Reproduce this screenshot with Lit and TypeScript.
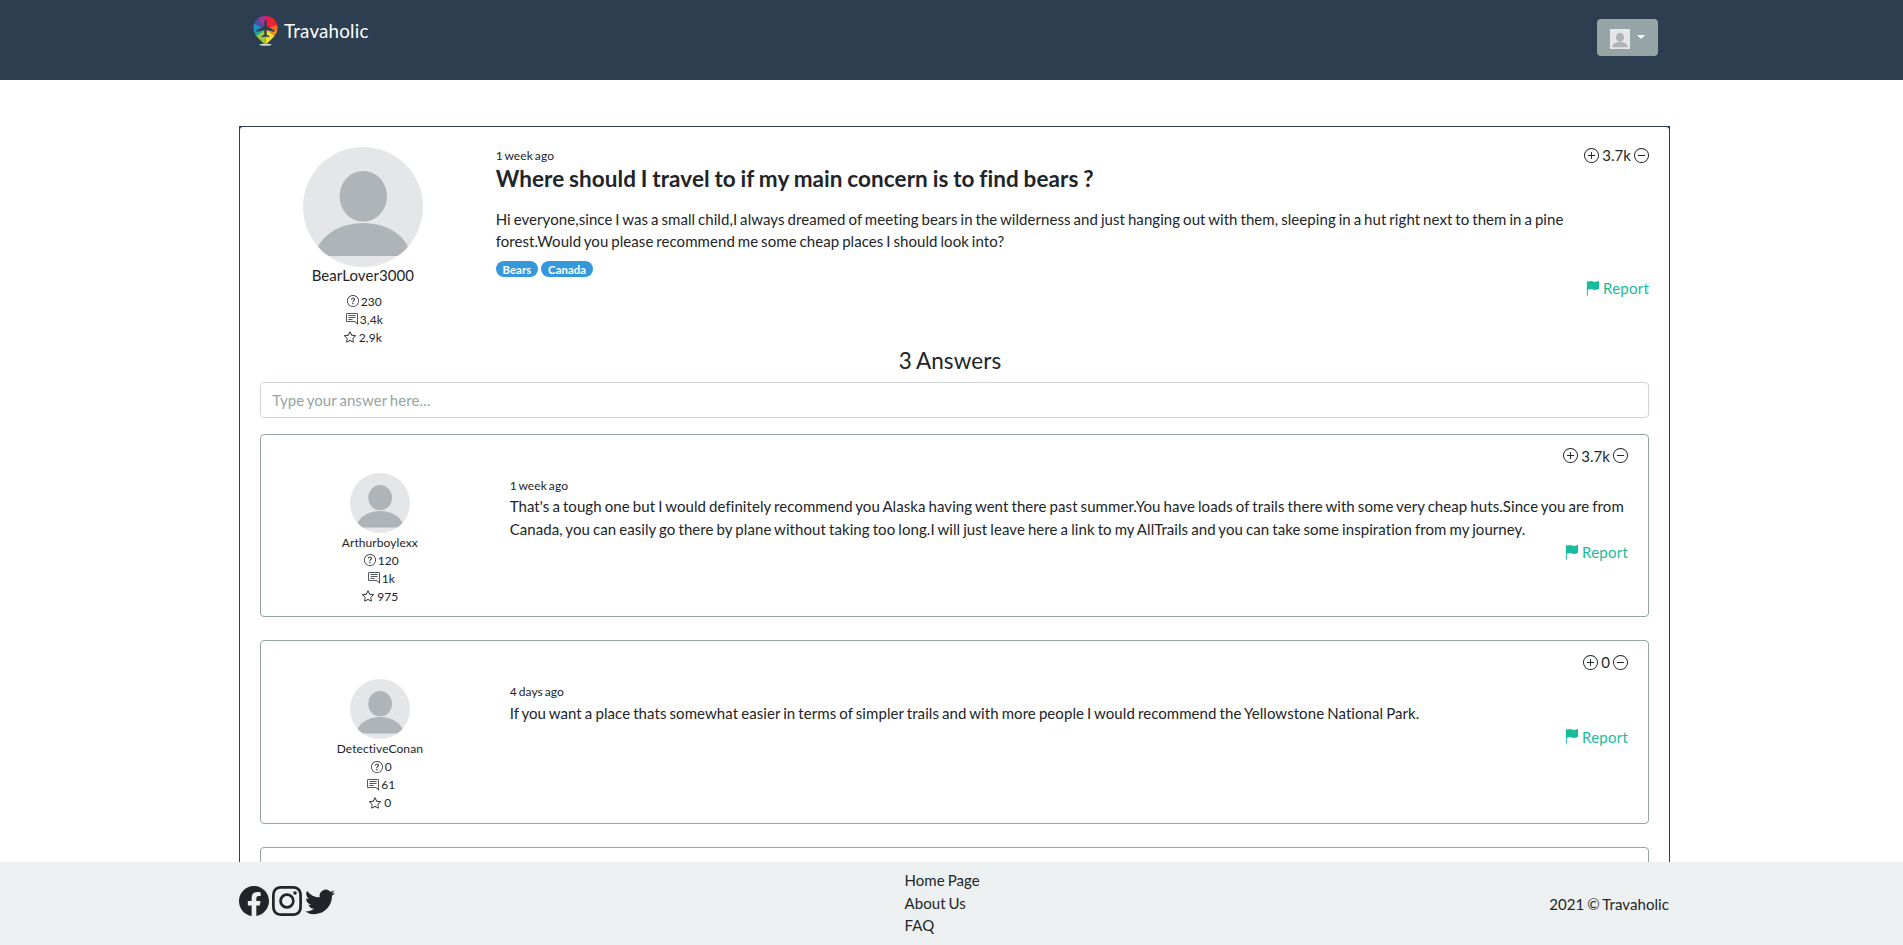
import { LitElement, html, css, svg } from "lit";
import { customElement, property } from "lit/decorators.js";

const paths: Record<string, unknown> = {
  plus: svg`<path d="M8 15A7 7 0 1 1 8 1a7 7 0 0 1 0 14zm0 1A8 8 0 1 0 8 0a8 8 0 0 0 0 16z"/><path d="M8 4a.5.5 0 0 1 .5.5v3h3a.5.5 0 0 1 0 1h-3v3a.5.5 0 0 1-1 0v-3h-3a.5.5 0 0 1 0-1h3v-3A.5.5 0 0 1 8 4z"/>`,
  minus: svg`<path d="M8 15A7 7 0 1 1 8 1a7 7 0 0 1 0 14zm0 1A8 8 0 1 0 8 0a8 8 0 0 0 0 16z"/><path d="M4 8a.5.5 0 0 1 .5-.5h7a.5.5 0 0 1 0 1h-7A.5.5 0 0 1 4 8z"/>`,
  question: svg`<path d="M8 15A7 7 0 1 1 8 1a7 7 0 0 1 0 14zm0 1A8 8 0 1 0 8 0a8 8 0 0 0 0 16z"/><path d="M5.255 5.786a.237.237 0 0 0 .241.247h.825c.138 0 .248-.113.266-.25.09-.656.54-1.134 1.342-1.134.686 0 1.314.343 1.314 1.168 0 .635-.374.927-.965 1.371-.673.489-1.206 1.06-1.168 1.987l.003.217a.25.25 0 0 0 .25.246h.811a.25.25 0 0 0 .25-.25v-.105c0-.718.273-.927 1.01-1.486.609-.463 1.244-.977 1.244-2.056 0-1.511-1.276-2.241-2.673-2.241-1.267 0-2.655.59-2.75 2.286zm1.557 5.763c0 .533.425.927 1.01.927.609 0 1.028-.394 1.028-.927 0-.552-.42-.94-1.029-.94-.584 0-1.009.388-1.009.94z"/>`,
  chat: svg`<path d="M2 1a1 1 0 0 0-1 1v8a1 1 0 0 0 1 1h9.586a2 2 0 0 1 1.414.586l2 2V2a1 1 0 0 0-1-1H2zm12-1a2 2 0 0 1 2 2v12.793a.5.5 0 0 1-.854.353l-2.853-2.853a1 1 0 0 0-.707-.293H2a2 2 0 0 1-2-2V2a2 2 0 0 1 2-2h12z"/><path d="M3 3.5a.5.5 0 0 1 .5-.5h9a.5.5 0 0 1 0 1h-9a.5.5 0 0 1-.5-.5zM3 6a.5.5 0 0 1 .5-.5h9a.5.5 0 0 1 0 1h-9A.5.5 0 0 1 3 6zm0 2.5a.5.5 0 0 1 .5-.5h5a.5.5 0 0 1 0 1h-5a.5.5 0 0 1-.5-.5z"/>`,
  star: svg`<path d="M2.866 14.85c-.078.444.36.791.746.593l4.39-2.256 4.389 2.256c.386.198.824-.149.746-.592l-.83-4.73 3.522-3.356c.33-.314.16-.888-.282-.95l-4.898-.696L8.465.792a.513.513 0 0 0-.927 0L5.354 5.12l-4.898.696c-.441.062-.612.636-.283.95l3.523 3.356-.83 4.73zm4.905-2.767-3.686 1.894.694-3.957a.565.565 0 0 0-.163-.505L1.71 6.745l4.052-.576a.525.525 0 0 0 .393-.288L8 2.223l1.847 3.658a.525.525 0 0 0 .393.288l4.052.575-2.906 2.77a.565.565 0 0 0-.163.506l.694 3.957-3.686-1.894a.503.503 0 0 0-.461 0z"/>`,
  flag: svg`<path d="M14.778.085A.5.5 0 0 1 15 .5V8a.5.5 0 0 1-.314.464l-.003.001-.006.003-.023.009a12.435 12.435 0 0 1-.397.15c-.264.095-.631.223-1.047.35-.816.252-1.879.523-2.71.523-.847 0-1.548-.28-2.158-.525l-.028-.01C7.68 8.71 7.14 8.5 6.5 8.5c-.7 0-1.638.23-2.437.477A19.626 19.626 0 0 0 3 9.342V15.5a.5.5 0 0 1-1 0V.5a.5.5 0 0 1 1 0v.282c.226-.079.496-.17.79-.26C4.606.272 5.67 0 6.5 0c.84 0 1.524.277 2.121.519l.043.018C9.286.788 9.828 1 10.5 1c.7 0 1.638-.23 2.437-.477a19.587 19.587 0 0 0 1.349-.476l.019-.007.004-.002z"/>`,
  facebook: svg`<path d="M16 8.049c0-4.446-3.582-8.05-8-8.05C3.58 0-.002 3.603-.002 8.05c0 4.017 2.926 7.347 6.75 7.951v-5.625h-2.03V8.05H6.75V6.275c0-2.017 1.195-3.131 3.022-3.131.876 0 1.791.157 1.791.157v1.98h-1.009c-.993 0-1.303.621-1.303 1.258v1.51h2.218l-.354 2.326H9.25V16c3.824-.604 6.75-3.934 6.75-7.951z"/>`,
  instagram: svg`<path d="M8 0C5.829 0 5.556.01 4.703.048 3.85.088 3.269.222 2.76.42a3.917 3.917 0 0 0-1.417.923A3.927 3.927 0 0 0 .42 2.76C.222 3.268.087 3.85.048 4.7.01 5.555 0 5.827 0 8.001c0 2.172.01 2.444.048 3.297.04.852.174 1.433.372 1.942.205.526.478.972.923 1.417.444.445.89.719 1.416.923.51.198 1.09.333 1.942.372C5.555 15.99 5.827 16 8 16s2.444-.01 3.298-.048c.851-.04 1.434-.174 1.943-.372a3.916 3.916 0 0 0 1.416-.923c.445-.445.718-.891.923-1.417.197-.509.332-1.09.372-1.942C15.99 10.445 16 10.173 16 8s-.01-2.445-.048-3.299c-.04-.851-.175-1.433-.372-1.941a3.926 3.926 0 0 0-.923-1.417A3.911 3.911 0 0 0 13.24.42c-.51-.198-1.092-.333-1.943-.372C10.443.01 10.172 0 7.998 0h.003zm-.717 1.442h.718c2.136 0 2.389.007 3.232.046.78.035 1.204.166 1.486.275.373.145.64.319.92.599.28.28.453.546.598.92.11.281.24.705.275 1.485.039.843.047 1.096.047 3.231s-.008 2.389-.047 3.232c-.035.78-.166 1.203-.275 1.485a2.47 2.47 0 0 1-.599.919c-.28.28-.546.453-.92.598-.28.11-.704.24-1.485.276-.843.038-1.096.047-3.232.047s-2.39-.009-3.233-.047c-.78-.036-1.203-.166-1.485-.276a2.478 2.478 0 0 1-.92-.598 2.48 2.48 0 0 1-.6-.92c-.109-.281-.24-.705-.275-1.485-.038-.843-.046-1.096-.046-3.233 0-2.136.008-2.388.046-3.231.036-.78.166-1.204.276-1.486.145-.373.319-.64.599-.92.28-.28.546-.453.92-.598.282-.11.705-.24 1.485-.276.738-.034 1.024-.044 2.515-.045v.002zm4.988 1.328a.96.96 0 1 0 0 1.92.96.96 0 0 0 0-1.92zm-4.27 1.122a4.109 4.109 0 1 0 0 8.217 4.109 4.109 0 0 0 0-8.217zm0 1.441a2.667 2.667 0 1 1 0 5.334 2.667 2.667 0 0 1 0-5.334z"/>`,
  twitter: svg`<path d="M5.026 15c6.038 0 9.341-5.003 9.341-9.334 0-.14 0-.282-.006-.422A6.685 6.685 0 0 0 16 3.542a6.658 6.658 0 0 1-1.889.518 3.301 3.301 0 0 0 1.447-1.817 6.533 6.533 0 0 1-2.087.793A3.286 3.286 0 0 0 7.875 6.03a9.325 9.325 0 0 1-6.767-3.429 3.289 3.289 0 0 0 1.018 4.382A3.323 3.323 0 0 1 .64 6.575v.045a3.288 3.288 0 0 0 2.632 3.218 3.203 3.203 0 0 1-.865.115 3.23 3.23 0 0 1-.614-.057 3.283 3.283 0 0 0 3.067 2.277A6.588 6.588 0 0 1 .78 13.58a6.32 6.32 0 0 1-.78-.045A9.344 9.344 0 0 0 5.026 15z"/>`,
};

@customElement("ui-icon")
class UiIcon extends LitElement {
  static styles = css`
    :host { display: block; flex: none; width: 1em; height: 1em; }
    svg { display: block; width: 100%; height: 100%; fill: currentColor; }
  `;
  @property() name = "plus";
  render() {
    return html`<svg viewBox="0 0 16 16">${paths[this.name]}</svg>`;
  }
}

@customElement("user-avatar")
class UserAvatar extends LitElement {
  static styles = css`
    :host { display: block; flex: none; overflow: hidden; background: #e4e6e7; }
    svg { display: block; width: 100%; height: 100%; }
    .shape { fill: #aeb4b7; }
  `;
  render() {
    return html`<svg viewBox="0 0 120 120">
      <ellipse class="shape" cx="60.3" cy="49.3" rx="23.7" ry="25.4"></ellipse>
      <path class="shape" d="M12 109C15 90 35 76 60.300 76S105 90 108 109Z"></path>
    </svg>`;
  }
}

@customElement("brand-logo")
class BrandLogo extends LitElement {
  static styles = css`
    :host { display: block; width: 25px; height: 31px; }
    svg { display: block; }
  `;
  render() {
    return html`<svg width="25" height="31" viewBox="0 0 25 31">
      <defs>
        <clipPath id="pin"><path d="M12.500 0C5.500 0 .4 5.200 .4 11.800C.4 19 7 23.500 12.500 29C18 23.500 24.600 19 24.600 11.800C24.600 5.200 19.500 0 12.500 0Z"/></clipPath>
      </defs>
      <ellipse cx="12.500" cy="28.800" rx="6" ry="1" fill="#d5dbdd"/>
      <g clip-path="url(#pin)">
        <path d="M12.500 13L-4 8V-4H2Z" fill="#4a4fa0"/>
        <path d="M12.500 13L1-4H13Z" fill="#a4348f"/>
        <path d="M12.500 13V-4H20Z" fill="#e8175c"/>
        <path d="M12.500 13L18-4H29V8Z" fill="#ee2330"/>
        <path d="M12.500 13L29 7V16Z" fill="#f26a25"/>
        <path d="M12.500 13L29 15V24Z" fill="#f8941f"/>
        <path d="M12.500 13L28 24L12.500 31Z" fill="#f5dc2b"/>
        <path d="M12.500 13V31L-3 24Z" fill="#9ccb3a"/>
        <path d="M12.500 13L-3 25V15Z" fill="#1fa8a0"/>
        <path d="M12.500 13L-3 16V6Z" fill="#1b8fc6"/>
      </g>
      <path d="M12.500 3.800C13.300 3.800 13.700 5 13.700 6.500V10L21.500 14.500V16L13.700 14V18.700L16.300 20.300V21.300L12.500 20.600L8.700 21.300V20.300L11.300 18.700V14L3.500 16V14.500L11.300 10V6.500C11.300 5 11.700 3.800 12.500 3.800Z" fill="#2c3e50"/>
    </svg>`;
  }
}

interface Answer {
  user: string;
  stats: [string, string, string];
  votes: string;
  time: string;
  text: string;
}

const answers: Answer[] = [
  {
    user: "Arthurboylexx",
    stats: ["120", "1k", "975"],
    votes: "3.7k",
    time: "1 week ago",
    text: "That's a tough one but I would definitely recommend you Alaska having went there past summer.You have loads of trails there with some very cheap huts.Since you are from Canada, you can easily go there by plane without taking too long.I will just leave here a link to my AllTrails and you can take some inspiration from my journey.",
  },
  {
    user: "DetectiveConan",
    stats: ["0", "61", "0"],
    votes: "0",
    time: "4 days ago",
    text: "If you want a place thats somewhat easier in terms of simpler trails and with more people I would recommend the Yellowstone National Park.",
  },
];

@customElement("app-root")
class AppRoot extends LitElement {
  static styles = css`
    :host {
      display: flex; flex-direction: column; height: 100vh; overflow: hidden;
      background: #fff; color: #212529;
      font: 400 15px/22.5px Lato, "Liberation Sans", sans-serif;
      letter-spacing: 0.07px; word-spacing: -1px;
    }
    * { box-sizing: border-box; }
    .nav { flex: none; height: 80px; background: #2c3e50; display: flex; justify-content: space-between; align-items: flex-start; padding: 0 245px 0 253px; }
    .brand { display: flex; align-items: center; gap: 6px; padding-top: 16px; color: #fff; font-size: 18.75px; line-height: 30px; letter-spacing: 0.2px; }
    .brand span { margin-top: -2px; }
    .menu { display: flex; align-items: center; width: 61px; height: 37px; margin-top: 19px; padding: 1px 13px 0; border: 0; border-radius: 4px; background: #95a5a6; gap: 7px; }
    .menu user-avatar { width: 20px; height: 20px; margin-top: 1px; }
    .caret { border: 4.500px solid transparent; border-top-color: #fff; border-bottom: 0; margin-top: -3px; }
    .main { flex: 1; min-height: 0; overflow: hidden; padding: 46px 233px 0 239px; }
    .frame { background: #2c3e50; padding: 1px; }
    .question { border-radius: 3px; background: #fff; padding: 20px; height: 1200px; }
    .row { display: grid; grid-template-columns: 2fr 10fr; margin: 0 -15px 0 -16px; }
    .side { display: flex; flex-direction: column; align-items: center; padding: 0 15px; }
    .question > .row > .side { padding: 0 14px 0 15px; }
    .side user-avatar { width: 120px; height: 120px; border-radius: 50%; }
    .user { margin: -3px 0 6px; }
    .stat { display: flex; align-items: center; font-size: 12px; line-height: 18px; gap: 2px; padding-left: 3px; }
    .stat ui-icon { margin-top: -1px; }
    .stat:last-child { gap: 3px; padding: 0; }
    .answer .stat:last-child { padding-left: 1px; }
    .body { padding: 0 15px; min-width: 0; }
    .head { display: flex; justify-content: space-between; align-items: flex-start; height: 18px; }
    .time { font-size: 12px; line-height: 18px; letter-spacing: 0.09px; word-spacing: -1.2px; }
    .votes { display: flex; align-items: center; gap: 3px; line-height: 18px; }
    .head .votes { margin-top: -1px; }
    .title { margin: 0; font-size: 22.5px; line-height: 27px; font-weight: 700; word-spacing: -0.75px; }
    .text { margin: 0; word-spacing: -0.870px; }
    .question-text { margin: 15.500px 0 8.500px; word-spacing: -1px; }
    .tags { display: flex; gap: 3px; }
    .tag { height: 16px; border-radius: 8px; padding: 1px 6.900px 0; background: #3498db; color: #fff; font-size: 11.25px; line-height: 16px; font-weight: 700; letter-spacing: 0.12px; }
    .report { display: flex; justify-content: flex-end; align-items: center; gap: 3px; color: #18bc9c; letter-spacing: 0.220px; }
    .count { margin: 0 9px 8.250px 0; text-align: center; font-size: 22.500px; line-height: 27px; font-weight: 400; }
    .reply { display: block; width: 100%; height: 36px; padding: 0 11.250px; border: 1px solid #ced4da; border-radius: 4px; font: inherit; letter-spacing: inherit; word-spacing: inherit; color: #212529; background: #fff; }
    .reply::placeholder { color: #95a5a6; opacity: 1; }
    .answers { display: flex; flex-direction: column; gap: 23px; margin-top: 16px; }
    .answer { flex: none; height: 183.600px; border: 1px solid #95a5a6; border-radius: 4px; padding: 12px 20px 0; }
    .answer .votes { justify-content: flex-end; }
    .answer .side { padding-top: 8px; font-size: 12px; line-height: 18px; }
    .answer .side user-avatar { width: 60px; height: 60px; }
    .answer .user { margin: 0.800px 0 0; }
    .answer .body { padding-top: 12px; }
    .answer .text { margin: 0.700px 0 1px; }
    .footer { flex: none; height: 83px; background: #ecf0f1; display: grid; grid-template-columns: 665.500px 1fr auto; align-items: center; padding: 0 234px 0 239px; }
    .social { display: flex; gap: 3px; font-size: 30px; margin-top: -5px; }
    .links { display: flex; flex-direction: column; margin-top: -1px; }
    .copy { margin-top: 1px; }
  `;

  stats(values: string[]) {
    const names = ["question", "chat", "star"];
    return values.map((v, i) => html`<div class="stat"><ui-icon name=${names[i]}></ui-icon><span>${v}</span></div>`);
  }

  votes(value: string) {
    return html`<div class="votes"><ui-icon name="plus"></ui-icon><span>${value}</span><ui-icon name="minus"></ui-icon></div>`;
  }

  report() {
    return html`<div class="report"><ui-icon name="flag"></ui-icon><span>Report</span></div>`;
  }

  render() {
    return html`
      <nav class="nav">
        <div class="brand"><brand-logo></brand-logo><span>Travaholic</span></div>
        <button class="menu"><user-avatar></user-avatar><span class="caret"></span></button>
      </nav>
      <main class="main">
        <div class="frame">
        <section class="question">
          <div class="row">
            <div class="side">
              <user-avatar></user-avatar>
              <div class="user">BearLover3000</div>
              ${this.stats(["230", "3,4k", "2,9k"])}
            </div>
            <div class="body">
              <div class="head"><span class="time">1 week ago</span>${this.votes("3.7k")}</div>
              <h4 class="title">Where should I travel to if my main concern is to find bears ?</h4>
              <p class="text question-text">Hi everyone,since I was a small child,I always dreamed of meeting bears in the wilderness and just hanging out with them, sleeping in a hut right next to them in a pine forest.Would you please recommend me some cheap places I should look into?</p>
              <div class="tags"><span class="tag">Bears</span><span class="tag">Canada</span></div>
              ${this.report()}
            </div>
          </div>
          <h4 class="count">3 Answers</h4>
          <input class="reply" placeholder="Type your answer here..." />
          <div class="answers">
            ${answers.map((a) => html`
              <article class="answer">
                ${this.votes(a.votes)}
                <div class="row">
                  <div class="side">
                    <user-avatar></user-avatar>
                    <div class="user">${a.user}</div>
                    ${this.stats(a.stats)}
                  </div>
                  <div class="body">
                    <div class="time">${a.time}</div>
                    <p class="text">${a.text}</p>
                    ${this.report()}
                  </div>
                </div>
              </article>`)}
            <article class="answer"></article>
          </div>
        </section>
        </div>
      </main>
      <footer class="footer">
        <div class="social"><ui-icon name="facebook"></ui-icon><ui-icon name="instagram"></ui-icon><ui-icon name="twitter"></ui-icon></div>
        <div class="links"><span>Home Page</span><span>About Us</span><span>FAQ</span></div>
        <span class="copy">2021 © Travaholic</span>
      </footer>
    `;
  }
}
